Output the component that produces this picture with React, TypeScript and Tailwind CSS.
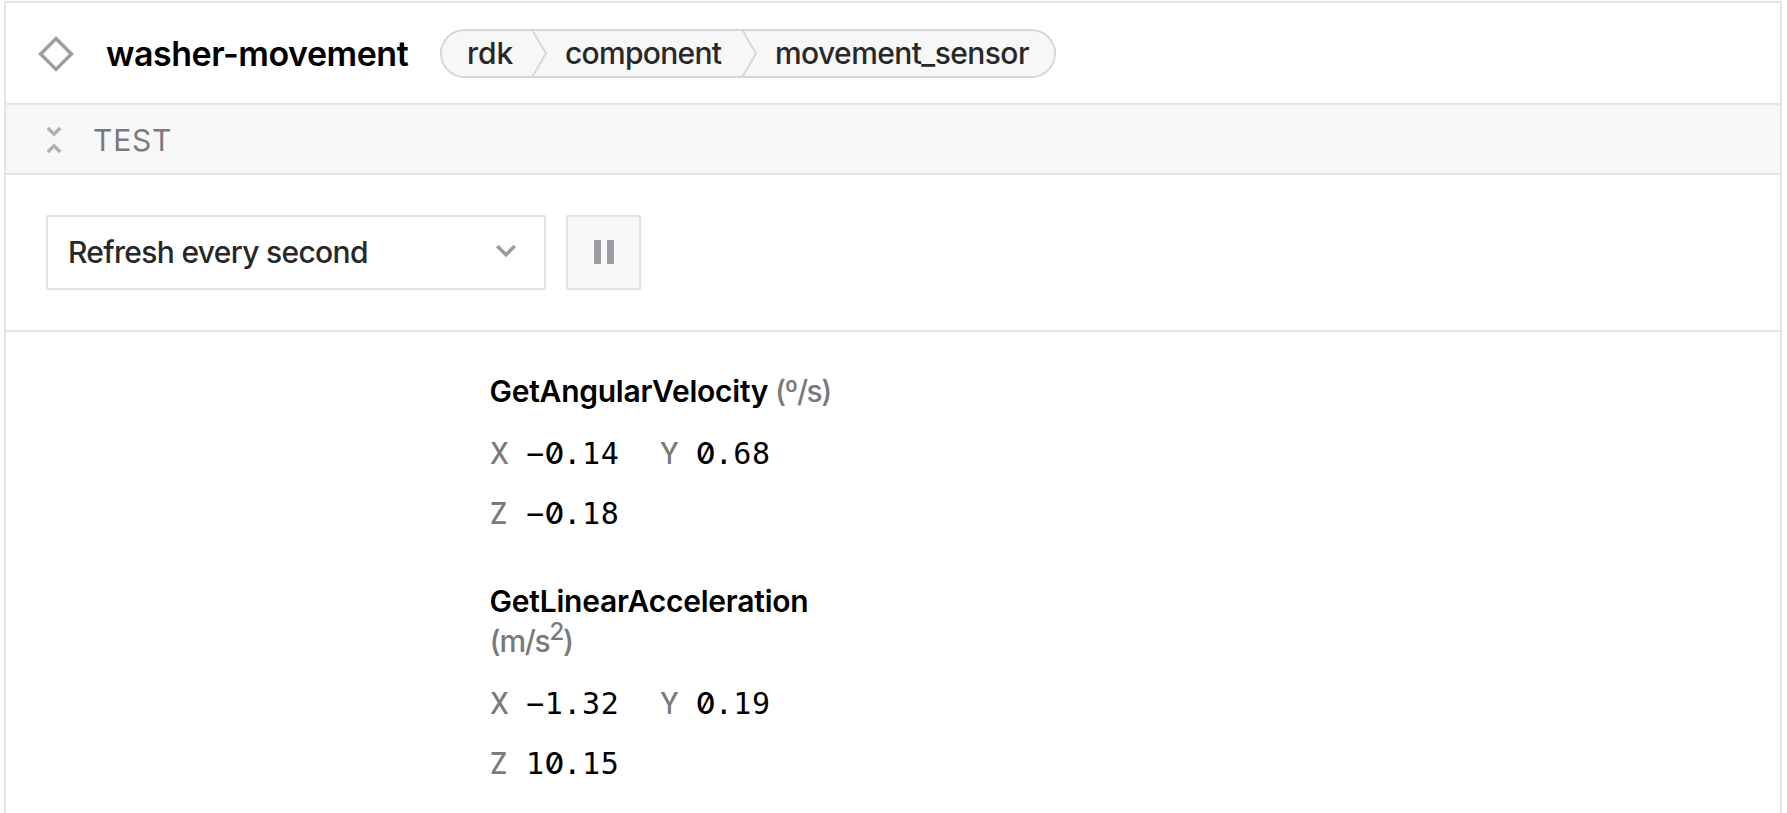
import React from "react";

const crumbs = ["rdk", "component", "movement_sensor"];

const line = "border-[#e4e4e6]";

function CrumbDivider() {
  return (
    <svg width="16" height="45" viewBox="0 0 16 45" fill="none" stroke="#d7d7d9" strokeWidth="2">
      <path d="M0.5 -0.5 L14 22.5 L0.5 45.5" />
    </svg>
  );
}

function Reading({ axis, value }: { axis: string; value: string }) {
  return (
    <div className="flex items-center leading-[40px]">
      <span className="w-[36.5px] text-[#7a7a7c]">
        <span className="inline-block origin-left scale-x-[0.9] font-[450]">{axis}</span>
      </span>
      <span className="relative top-px whitespace-nowrap font-['DejaVu_Sans_Mono',monospace] text-[30px] tracking-[0.6px] text-black">
        {value.split("").map((c, i) =>
          c === "0" ? (
            <span key={i} className="inline-block w-[18.66px] text-center font-['Inter',sans-serif] font-[450] leading-none tracking-normal slashed-zero">
              {c}
            </span>
          ) : (
            c
          ),
        )}
      </span>
    </div>
  );
}

function Readings({ x, y, z }: { x: string; y: string; z: string }) {
  return (
    <div className="mt-[22px] flex flex-col gap-[20px]">
      <div className="flex">
        <div className="w-[170px]">
          <Reading axis="X" value={x} />
        </div>
        <Reading axis="Y" value={y} />
      </div>
      <Reading axis="Z" value={z} />
    </div>
  );
}

export default function App() {
  return (
    <div className="h-[813px] overflow-hidden bg-white pl-1 pt-px font-['Inter',sans-serif] text-[30px] text-[#282829]">
      <div className={`h-[900px] w-[1778px] border-2 ${line}`}>
        <header className={`flex h-[102px] items-center border-b-2 ${line}`}>
          <svg className="ml-8 mt-[2px]" width="36" height="36" viewBox="0 0 36 36" fill="none" stroke="#9c9ca4" strokeWidth="3.5">
            <path d="M18 2.6 L33.4 18 L18 33.4 L2.6 18 Z" />
          </svg>
          <h1 className="ml-[32px] w-[334px] whitespace-nowrap text-[34px] font-semibold tracking-[-0.47px] text-black">washer-movement</h1>
          <div className="flex h-[49px] w-[616px] items-center rounded-full border-2 border-[#d7d7d9] bg-[#f7f7f8] pl-[25px] font-[450]">
            <span className="w-[65px]">{crumbs[0]}</span>
            <CrumbDivider />
            <span className="ml-[17px] w-[177px] tracking-[-0.7px]">{crumbs[1]}</span>
            <CrumbDivider />
            <span className="ml-[17px] tracking-[-0.58px]">{crumbs[2]}</span>
          </div>
        </header>
        <div className={`flex h-[70px] items-center border-b-2 bg-[#f7f7f8] ${line}`}>
          <svg className="ml-[40px] mt-0.5" width="16" height="28" viewBox="0 0 16 28" fill="none" stroke="#aeaeb5" strokeWidth="3.4">
            <path d="M1.8 2 L8 8.2 L14.2 2 M1.8 26 L8 19.8 L14.2 26" />
          </svg>
          <span className="ml-[31px] mt-0.5 tracking-[0.8px] text-[#7a7a7c]">TEST</span>
        </div>
        <div className="flex h-[157px] gap-5 border-b-2 border-[#e4e4e9] pl-10 pt-10">
          <button className={`flex h-[75px] w-[500px] items-center border-2 pl-5 ${line}`}>
            <span className="w-[427px] text-left font-[450] tracking-[-0.68px]">Refresh every second</span>
            <svg className="mb-1" width="22" height="14" viewBox="0 0 22 14" fill="none" stroke="#9c9ca4" strokeWidth="3.5">
              <path d="M2.2 2 L11 10.8 L19.8 2" />
            </svg>
          </button>
          <button className={`flex h-[75px] w-[75px] items-center justify-center border-2 bg-[#f7f7f8] ${line}`}>
            <svg className="mb-px" width="20" height="24" viewBox="0 0 20 24" fill="#9c9ca4">
              <path d="M0 0h7v24H0z M13 0h7v24h-7z" />
            </svg>
          </button>
        </div>
        <div className="ml-[483.5px] pt-[39px] leading-[40px]">
          <section>
            <h2 className="flex whitespace-nowrap">
              <span className="w-[285.5px] font-semibold tracking-[-0.25px] text-black">GetAngularVelocity</span>
              <span className="font-[450] tracking-[-1.5px] text-[#7a7a7c]">(º/s)</span>
            </h2>
            <Readings x="−0.14" y="0.68" z="−0.18" />
          </section>
          <section className="mt-[48px]">
            <h2 className="whitespace-nowrap">
              <span className="block font-semibold tracking-[-0.22px] text-black">GetLinearAcceleration</span>
              <span className="block font-[450] tracking-[-1.3px] text-[#7a7a7c]">
                (m/s<sup className="text-[24px]">2</sup>)
              </span>
            </h2>
            <Readings x="−1.32" y="0.19" z="10.15" />
          </section>
        </div>
      </div>
    </div>
  );
}
